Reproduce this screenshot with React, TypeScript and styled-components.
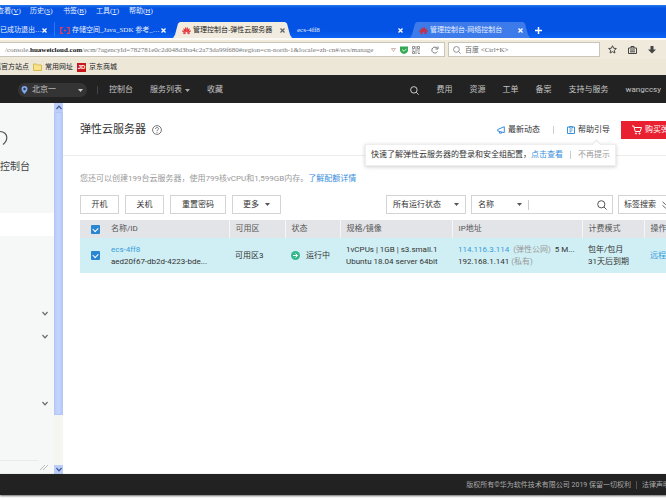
import React from "react";
import styled, { createGlobalStyle } from "styled-components";

const uiFont = `Roboto, "Noto Sans CJK SC", sans-serif`;
const chromeFont = `"Liberation Serif", "Noto Sans CJK SC", serif`;

const GlobalStyle = createGlobalStyle`
  * { box-sizing: border-box; }
  body { margin: 0; background: #fff; overflow: hidden; font-family: ${uiFont}; font-size: 8px; line-height: 12px; color: #333; }
  button, input, select { font: inherit; color: inherit; margin: 0; padding: 0; border: 0; background: none; border-radius: 0; outline: 0; }
  a { color: inherit; text-decoration: none; }
  svg { display: block; flex: none; }
`;

const Screen = styled.div`
  display: flex;
  flex-direction: column;
  height: 100vh;
  padding: 5px 0;
  overflow: hidden;
  white-space: nowrap;
`;

/* Browser frame */
const TitleArea = styled.div`
  flex: none;
  background: linear-gradient(#2a78e8, #0453e4 3px, #0453e4 26px, #0a62f4);
  color: #fff;
  font-family: ${chromeFont};
  font-size: 7px;
`;
const MenuBar = styled.nav`
  display: flex;
  height: 17px;
  gap: 9px;
  margin-left: -3px;
`;
const MenuItem = styled.button`
  width: 24px;
  height: 12px;
  text-align: left;
  white-space: nowrap;
  color: #e6efff;
`;
const TabStrip = styled.div`
  display: flex;
  height: 16px;
`;
const Tab = styled.div<{ $width: number; $kind?: "active" | "light" | "first" }>`
  display: flex;
  align-items: center;
  flex: none;
  gap: 2px;
  width: ${(p) => p.$width}px;
  padding: 0 5px 0 ${(p) => (p.$kind === "first" ? 0 : p.$kind ? 9 : 5)}px;
  color: ${(p) => (p.$kind === "active" ? "#222" : "#e6efff")};
  background: ${(p) => (p.$kind === "active" ? "#f1ecdf" : p.$kind === "light" ? "#3d7bea" : "none")};
  clip-path: ${(p) => (p.$kind === "active" || p.$kind === "light" ? "polygon(0 100%, 2px 80%, 5px 10%, 7px 0, calc(100% - 7px) 0, calc(100% - 5px) 10%, calc(100% - 2px) 80%, 100% 100%)" : "none")};
`;
const TabText = styled.span`
  flex: 1;
  min-width: 0;
`;
const TabClose = styled.button`
  display: flex;
  margin-right: 2px;
`;
const TabDivider = styled.i`
  width: 1px;
  height: 14px;
  background: #2f74ee;
`;
const AddTab = styled.button`
  display: flex;
  align-items: center;
  margin-left: 5px;
`;
const AddressBar = styled.div`
  display: flex;
  align-items: center;
  flex: none;
  height: 21px;
  border-top: 2px solid #fbfaf6;
  background: #efeadb;
  font-family: ${chromeFont};
  font-size: 7px;
`;
const UrlBox = styled.div`
  display: flex;
  align-items: center;
  flex: none;
  width: 445px;
  height: 15px;
  border: 1px solid #c9c5b8;
  border-left: 0;
  background: #fff;
  color: #777;
  gap: 4px;
`;
const UrlText = styled.a`
  width: 387px;
  padding-left: 5px;
  b { color: #111; }
`;
const Reload = styled.button`
  display: flex;
  margin-left: 7px;
`;
const SearchBox = styled.label`
  display: flex;
  align-items: center;
  gap: 4px;
  flex: 1;
  height: 15px;
  margin: 0 8px 0 3px;
  padding-left: 4px;
  border: 1px solid #c9c5b8;
  background: #fff;
  input { flex: 1; min-width: 0; }
  input::placeholder { color: #666; opacity: 1; }
`;
const ToolIcons = styled.div`
  display: flex;
  align-items: center;
  justify-content: space-between;
  width: 58px;
  padding-right: 10px;
`;
const ToolButton = styled.button`
  display: flex;
`;
const Bookmarks = styled.div`
  display: flex;
  align-items: center;
  flex: none;
  height: 16px;
  margin-left: -6px;
  background: #ede7d8;
  color: #222;
  font-family: ${chromeFont};
  font-size: 7px;
`;
const Bookmark = styled.a`
  display: flex;
  align-items: center;
  gap: 3px;
  margin-right: 4px;
`;
const JdLogo = styled.span`
  width: 9px;
  height: 9px;
  background: #c8161d;
  color: #fff;
  font: bold 6px/9px "Liberation Sans", sans-serif;
  text-align: center;
`;

/* Console header */
const Header = styled.header`
  display: flex;
  align-items: center;
  flex: none;
  height: 28px;
  padding: 2px 5px 0 18px;
  background: #222;
  color: #c4c4c4;
`;
const Region = styled.button`
  display: flex;
  align-items: center;
  gap: 4px;
  width: 69px;
  height: 14px;
  padding: 0 4px 0 3px;
  border-radius: 7px;
  background: #343434;
  svg:last-child { margin-left: auto; }
`;
const HeaderRule = styled.i`
  width: 1px;
  height: 8px;
  margin: 0 11px 0 10px;
  background: #444;
`;
const HeaderNav = styled.nav`
  display: flex;
  gap: 17px;
  a { display: flex; align-items: center; gap: 3px; }
`;
const UserNav = styled(HeaderNav)`
  margin-left: auto;
  align-items: center;
`;

/* Body */
const Body = styled.div`
  display: flex;
  flex: 1;
  min-height: 0;
`;
const Sidebar = styled.aside`
  display: flex;
  flex-direction: column;
  flex: none;
  width: 54px;
  background: #f5f8f7;
`;
const SideBrand = styled.div`
  display: flex;
  flex-direction: column;
  height: 110px;
  padding-top: 26px;
  gap: 14px;
  font-size: 10px;
  color: #444;
`;
const SideCurrent = styled.div`
  height: 23px;
  background: #fff;
`;
const SideGroup = styled.button<{ $height: number }>`
  display: flex;
  align-items: flex-end;
  justify-content: flex-end;
  height: ${(p) => p.$height}px;
  padding: 0 6px 0 0;
`;
const SideBottom = styled.div`
  display: flex;
  align-items: center;
  justify-content: flex-end;
  height: 14px;
  margin-top: auto;
  padding-right: 6px;
  background: linear-gradient(#e8ebea, #e8ebea) 0 0 / 38px 1px no-repeat;
`;
const ScrollTrack = styled.div`
  display: flex;
  flex-direction: column;
  flex: none;
  width: 9px;
  background: #f5f5f1;
`;
const ScrollArrow = styled.button`
  display: flex;
  align-items: center;
  justify-content: center;
  height: 9px;
  background: #bccdf8;
`;
const ScrollThumb = styled.div`
  height: 303px;
  margin-bottom: auto;
  border: 1px solid #b4c6f4;
  background: linear-gradient(90deg, #b9ccf8, #c6d5ff 50%, #b7c9fa);
`;
const Main = styled.main`
  flex: 1;
  min-width: 0;
`;
const PageHead = styled.div`
  display: flex;
  align-items: center;
  height: 53px;
  padding: 2px 0 0 17px;
  border-bottom: 1px solid #ececec;
`;
const Title = styled.h1`
  margin: 0 6px 0 0;
  font-size: 11px;
  line-height: 16px;
  font-weight: 400;
  color: #333;
`;
const HeadLinks = styled.div`
  display: flex;
  align-items: center;
  margin-left: auto;
`;
const HeadLink = styled.a`
  position: relative;
  display: flex;
  align-items: center;
  gap: 3px;
`;
const Rule = styled.i<{ $gap: number; $dark?: boolean }>`
  flex: none;
  width: 1px;
  height: 8px;
  margin: 0 ${(p) => p.$gap}px;
  background: ${(p) => (p.$dark ? "#555" : "#ccc")};
`;
const Buy = styled.button`
  display: flex;
  align-items: center;
  gap: 3px;
  width: 45px;
  height: 18px;
  margin-left: 11px;
  padding-left: 11px;
  overflow: hidden;
  background: #e9202f;
  color: #fff;
  white-space: nowrap;
`;
const Tip = styled.div`
  position: absolute;
  top: 20px;
  right: -6px;
  display: flex;
  align-items: center;
  height: 22px;
  padding: 0 5px;
  border: 1px solid #eee;
  background: #fff;
  box-shadow: 0 1px 4px rgba(0, 0, 0, 0.2);
  color: #333;
  &::before {
    content: "";
    position: absolute;
    top: -4px;
    right: 15px;
    width: 6px;
    height: 6px;
    border: solid #e6e6e6;
    border-width: 1px 0 0 1px;
    background: #fff;
    transform: rotate(45deg);
  }
`;
const TipAction = styled.button<{ $muted?: boolean }>`
  color: ${(p) => (p.$muted ? "#999" : "#3a8fdb")};
`;
const Quota = styled.p`
  margin: 17px 0 10px 17px;
  color: #999;
  a { color: #3a8fdb; }
`;
const Toolbar = styled.div`
  display: flex;
  gap: 6px;
  height: 19px;
  margin: 0 0 6px 17px;
`;
const Action = styled.button<{ $width: number }>`
  display: flex;
  align-items: center;
  justify-content: center;
  gap: 6px;
  flex: none;
  width: ${(p) => p.$width}px;
  border: 1px solid #d4d4d4;
  background: #fff;
  white-space: nowrap;
`;
const Filters = styled.div`
  display: flex;
  gap: 5px;
  margin-left: auto;
`;
const Select = styled.label<{ $width: number; $bare?: boolean }>`
  display: flex;
  align-items: center;
  width: ${(p) => p.$width}px;
  padding: 0 6px;
  border: ${(p) => (p.$bare ? "0" : "1px solid #d4d4d4")};
  select { flex: 1; min-width: 0; appearance: none; }
`;
const SearchGroup = styled.div`
  display: flex;
  align-items: center;
  width: 142px;
  padding-right: 5px;
  border: 1px solid #d4d4d4;
  input { flex: 1; min-width: 0; height: 10px; border-left: 1px solid #ccc; }
`;
const TagSearch = styled.button`
  display: flex;
  align-items: center;
  gap: 6px;
  width: 48px;
  padding-left: 5px;
  overflow: hidden;
  border: solid #d4d4d4;
  border-width: 1px 0 1px 1px;
  white-space: nowrap;
`;
const TableWrap = styled.div`
  padding-left: 17px;
`;
const Table = styled.table`
  width: 100%;
  table-layout: fixed;
  border-collapse: collapse;
  th, td { padding: 0 0 0 6px; text-align: left; font-weight: 400; overflow: hidden; }
  th:nth-child(1), td:nth-child(1) { padding-left: 11px; }
  th:nth-child(2), td:nth-child(2) { padding-left: 1px; }
  th { height: 18px; background: #e3e4e7; color: #555; border-left: 1px solid #f6f6f6; }
  th:nth-child(1), th:nth-child(2) { border-left: 0; }
  td { height: 35px; background: #d0eff4; }
`;
const Tick = styled.input.attrs({ type: "checkbox" })`
  appearance: none;
  display: block;
  width: 9px;
  height: 9px;
  border-radius: 1px;
  &:checked { background: #2a86d0; }
  &:checked::after {
    content: "";
    display: block;
    width: 4px;
    height: 3px;
    margin: 2px auto 0;
    border: solid #fff;
    border-width: 0 0 1px 1px;
    transform: rotate(-45deg);
  }
`;
const Blue = styled.a`
  color: #3a9bdc;
`;
const Muted = styled.span`
  color: #999;
`;
const Status = styled.span`
  display: flex;
  align-items: center;
  gap: 6px;
`;
const Footer = styled.footer`
  display: flex;
  align-items: center;
  justify-content: flex-end;
  flex: none;
  height: 21px;
  margin-right: -4px;
  background: #222;
  box-shadow: 0 1px 2px rgba(0, 0, 0, 0.6);
  color: #aaa;
  font-size: 7px;
`;

const Caret = ({ color = "#555" }: { color?: string }) => (
  <svg width="5" height="3" viewBox="0 0 5 3"><path d="M0 0h5L2.5 3z" fill={color} /></svg>
);
const Chevron = ({ color = "#666", up = false }: { color?: string; up?: boolean }) => (
  <svg width="6" height="5" viewBox="0 0 6 5" fill="none" stroke={color} strokeWidth="1.2">
    <path d={up ? "M.5 4L3 1.2 5.5 4" : "M.5 1L3 3.8 5.5 1"} />
  </svg>
);
const Magnifier = ({ color, size }: { color: string; size: number }) => (
  <svg width={size} height={size} viewBox="0 0 10 10" fill="none" stroke={color} strokeWidth="1">
    <circle cx="4.3" cy="4.3" r="3.6" /><path d="M7 7l2.6 2.6" />
  </svg>
);
const Huawei = () => (
  <svg width="9" height="9" viewBox="0 0 18 18" fill="#e3242c" stroke="#e3242c" strokeWidth=".6">
    <path d="M8.5 12C6 9 5.500 5 7.500 2.500 8.800 5 9 9 8.500 12zM9.500 12C12 9 12.500 5 10.500 2.500 9.200 5 9 9 9.500 12zM7.500 12.500C4.500 11 2.500 8 3.500 5 5.500 7 7.200 10 7.500 12.500zM10.500 12.500C13.500 11 15.500 8 14.500 5 12.500 7 10.800 10 10.500 12.500zM7 13.500C4 14 1 12 .5 9 3 9.800 6 11.500 7 13.500zM11 13.500C14 14 17 12 17.500 9 15 9.800 12 11.500 11 13.500zM7.500 14.300H2C3.500 16.500 6 16.500 7.500 14.300zM10.500 14.300H16C14.500 16.500 12 16.500 10.500 14.300z" />
  </svg>
);
const Close = ({ color = "#fff" }: { color?: string }) => (
  <TabClose aria-label="关闭标签页">
    <svg width="5" height="5" viewBox="0 0 5 5" stroke={color} strokeWidth="1.3"><path d="M.5.5l4 4M4.500.5l-4 4" /></svg>
  </TabClose>
);

const menus = ["查看(V)", "历史(S)", "书签(B)", "工具(T)", "帮助(H)"];
const userLinks = ["费用", "资源", "工单", "备案", "支持与服务", "wangccsy"];

export default function App() {
  return (
    <Screen>
      <GlobalStyle />
      <TitleArea>
        <MenuBar>
          {menus.map((m) => <MenuItem key={m}>{m.slice(0, 3)}<u>{m[3]}</u>)</MenuItem>)}
        </MenuBar>
        <TabStrip>
          <Tab $width={54} $kind="first"><TabText>已成功退出…</TabText><Close /></Tab>
          <TabDivider />
          <Tab $width={118}>
            <svg width="10" height="7" viewBox="0 0 10 7" fill="none" stroke="#e0405c" strokeWidth="1.3"><path d="M3 .7H.7v5.600H3M7 .7h2.300v5.600H7M4 3.500h2" /></svg>
            <TabText>存储空间_Java_SDK 参考_…</TabText><Close />
          </Tab>
          <Tab $width={119} $kind="active"><Huawei /><TabText>管理控制台-弹性云服务器</TabText><Close color="#666" /></Tab>
          <Tab $width={118}><TabText>ecs-4ff8</TabText><Close /></Tab>
          <Tab $width={120} $kind="light"><Huawei /><TabText>管理控制台-网络控制台</TabText><Close /></Tab>
          <AddTab aria-label="新标签页">
            <svg width="7" height="7" viewBox="0 0 7 7" stroke="#fff" strokeWidth="1.500"><path d="M3.500 0v7M0 3.500h7" /></svg>
          </AddTab>
        </TabStrip>
      </TitleArea>
      <AddressBar>
        <UrlBox>
          <UrlText href="#">/console.<b>huaweicloud.com</b>/ecm/?agencyId=782781e0c2d048d3ba4c2a73da99f680#region=cn-north-1&amp;locale=zh-cn#/ecs/manage</UrlText>
          <svg width="5" height="4" viewBox="0 0 5 4" fill="none" stroke="#b98" strokeWidth=".7"><path d="M.5.5h4L2.500 3.500z" /></svg>
          <svg width="8" height="8" viewBox="0 0 8 8"><path d="M0 .5h8v4C8 6 6 7.500 4 8 2 7.500 0 6 0 4.500z" fill="#35a853" /><path d="M2 3.500l2 1.800 2.500-2.500" stroke="#d8f3dd" fill="none" /></svg>
          <svg width="8" height="8" viewBox="0 0 8 8" stroke="#777" strokeWidth=".8" fill="none"><path d="M.5.5h2v2h-2zM5.500.5h2v2h-2zM.5 5.500h2v2h-2zM4 0v3M3 4h5M4 5v3M5.500 6h2M0 4h2M6 7.500h2" /></svg>
          <Reload aria-label="刷新">
            <svg width="8" height="8" viewBox="0 0 8 8" stroke="#777" fill="none"><path d="M6.500 5.500A3 3 0 1 1 6.200 2.200M7 .5v2.500H4.500" /></svg>
          </Reload>
        </UrlBox>
        <SearchBox><Magnifier color="#777" size={8} /><input aria-label="搜索" placeholder="百度 <Ctrl+K>" /></SearchBox>
        <ToolIcons>
          <ToolButton aria-label="收藏"><svg width="9" height="9" viewBox="0 0 10 10" fill="none" stroke="#444" strokeWidth="1.1"><path d="M5 .8l1.300 2.800 3 .3-2.300 2 .7 3L5 7.400 2.300 8.900l.7-3-2.300-2 3-.3z" /></svg></ToolButton>
          <ToolButton aria-label="书签"><svg width="9" height="8" viewBox="0 0 9 8" fill="none" stroke="#444"><path d="M.5 2h8v5.500h-8zM3 2V.5h3V2M2 4h5M2 5.800h5" /></svg></ToolButton>
          <ToolButton aria-label="下载"><svg width="8" height="8" viewBox="0 0 8 8" fill="#444"><path d="M2.500 0h3v3.500H8L4 7.500 0 3.500h2.500z" /></svg></ToolButton>
        </ToolIcons>
      </AddressBar>
      <Bookmarks>
        <Bookmark href="#">狐官方站点</Bookmark>
        <Bookmark href="#"><svg width="9" height="8" viewBox="0 0 9 8"><path d="M.5 1h3l1 1h4v5.500h-8z" fill="#f8e28a" stroke="#d9b84f" /></svg>常用网址</Bookmark>
        <Bookmark href="#"><JdLogo>JD</JdLogo>京东商城</Bookmark>
      </Bookmarks>
      <Header>
        <Region>
          <svg width="7" height="8" viewBox="0 0 7 8"><path d="M3.500 0A3 3 0 0 0 .5 3c0 2 3 5 3 5s3-3 3-5a3 3 0 0 0-3-3z" fill="#7fa6ea" /><circle cx="3.500" cy="3" r="1.200" fill="#26355c" /></svg>
          北京一<Caret color="#ccc" />
        </Region>
        <HeaderRule />
        <HeaderNav>
          <a href="#">控制台</a><a href="#">服务列表 <Caret color="#aaa" /></a><a href="#">收藏</a>
        </HeaderNav>
        <UserNav>
          <a href="#" aria-label="搜索"><Magnifier color="#ddd" size={9} /></a>
          {userLinks.map((t) => <a href="#" key={t}>{t}</a>)}
        </UserNav>
      </Header>
      <Body>
        <Sidebar>
          <SideBrand>
            <svg width="8" height="18" viewBox="0 0 8 18" fill="none" stroke="#555" strokeWidth="1.200"><path d="M0 2.500c4 0 6.800 2.500 6.800 6S5 14 3 15.500" /></svg>
            控制台
          </SideBrand>
          <SideCurrent />
          <SideGroup $height={80} aria-label="展开"><Chevron /></SideGroup>
          <SideGroup $height={23} aria-label="展开"><Chevron /></SideGroup>
          <SideGroup $height={67} aria-label="展开"><Chevron /></SideGroup>
          <SideBottom><svg width="8" height="6" viewBox="0 0 8 6" stroke="#bbb"><path d="M0 6l5-5M3 6l5-5" /></svg></SideBottom>
        </Sidebar>
        <ScrollTrack>
          <ScrollArrow aria-label="向上"><Chevron color="#3c559c" up /></ScrollArrow>
          <ScrollThumb />
          <ScrollArrow aria-label="向下"><Chevron color="#3c559c" /></ScrollArrow>
        </ScrollTrack>
        <Main>
          <PageHead>
            <Title>弹性云服务器</Title>
            <svg width="10" height="10" viewBox="0 0 10 10" fill="none" stroke="#666" strokeWidth=".9"><circle cx="5" cy="5" r="4.400" /><path d="M3.500 4c0-2 3-2 3-.2C6.500 4.800 5 4.800 5 6M5 6.800v1" /></svg>
            <HeadLinks>
              <HeadLink href="#">
                <svg width="8" height="8" viewBox="0 0 8 8" fill="none" stroke="#3a8fdb"><path d="M.7 3.500L7.300.7v6L.7 5zM2.500 5.200v2h2V6" /></svg>最新动态
              </HeadLink>
              <Rule $gap={13} />
              <HeadLink as="div">
                <svg width="8" height="8" viewBox="0 0 8 8" fill="none" stroke="#3a8fdb"><path d="M2 1H.5v6.500h7V1H6M2.500.5h3v1.500h-3zM2.500 4h3M2.500 5.800h2" /></svg><a href="#">帮助引导</a>
                <Tip role="tooltip">
                  快速了解弹性云服务器的登录和安全组配置，<TipAction>点击查看</TipAction><Rule $gap={7} /><TipAction $muted>不再提示</TipAction>
                </Tip>
              </HeadLink>
              <Buy>
                <svg width="10" height="10" viewBox="0 0 10 10" fill="none" stroke="#fff"><path d="M0 1h1.800l1.400 5.500h5L9.500 2.500H2.300" /><circle cx="4" cy="8.500" r=".6" /><circle cx="7.500" cy="8.500" r=".6" /></svg>购买弹性云服务器
              </Buy>
            </HeadLinks>
          </PageHead>
          <Quota>您还可以创建199台云服务器，使用799核vCPU和1,599GB内存。<a href="#">了解配额详情</a></Quota>
          <Toolbar>
            <Action $width={39}>开机</Action>
            <Action $width={39}>关机</Action>
            <Action $width={56}>重置密码</Action>
            <Action $width={49}>更多 <Caret /></Action>
            <Filters>
              <Select $width={80}><select aria-label="运行状态"><option>所有运行状态</option></select><Caret /></Select>
              <SearchGroup>
                <Select $width={56} $bare><select aria-label="搜索字段"><option>名称</option></select><Caret /></Select>
                <input aria-label="搜索内容" /><Magnifier color="#555" size={10} />
              </SearchGroup>
              <TagSearch>标签搜索
                <svg width="7" height="8" viewBox="0 0 7 8" fill="none" stroke="#666"><path d="M.5.8L3.500 3.500l3-2.700M.5 4.300L3.500 7l3-2.700" /></svg>
              </TagSearch>
            </Filters>
          </Toolbar>
          <TableWrap>
            <Table>
              <colgroup>
                {[30, 119, 56, 55, 112, 130, 62].map((w, i) => <col key={i} width={w} />)}
                <col />
              </colgroup>
              <thead>
                <tr>
                  <th><Tick defaultChecked aria-label="全选" /></th>
                  <th>名称/ID</th><th>可用区</th><th>状态</th><th>规格/镜像</th><th>IP地址</th><th>计费模式</th><th>操作</th>
                </tr>
              </thead>
              <tbody>
                <tr>
                  <td><Tick defaultChecked aria-label="选择 ecs-4ff8" /></td>
                  <td><Blue href="#">ecs-4ff8</Blue><br />aed20f67-db2d-4223-bde...</td>
                  <td>可用区3</td>
                  <td><Status><svg width="9" height="9" viewBox="0 0 9 9"><circle cx="4.500" cy="4.500" r="4.500" fill="#35b98a" /><path d="M2 4.500h4.500M4.500 2.500l2 2-2 2" fill="none" stroke="#fff" /></svg>运行中</Status></td>
                  <td>1vCPUs | 1GB | s3.small.1<br />Ubuntu 18.04 server 64bit</td>
                  <td><Blue href="#">114.116.3.114</Blue> <Muted>&nbsp;(弹性公网)</Muted> &nbsp;5 M...<br />192.168.1.141 <Muted>(私有)</Muted></td>
                  <td>包年/包月<br />31天后到期</td>
                  <td><Blue href="#">远程登录</Blue></td>
                </tr>
              </tbody>
            </Table>
          </TableWrap>
        </Main>
      </Body>
      <Footer>版权所有©华为软件技术有限公司 2019 保留一切权利<Rule $gap={5} $dark />法律声明</Footer>
    </Screen>
  );
}
